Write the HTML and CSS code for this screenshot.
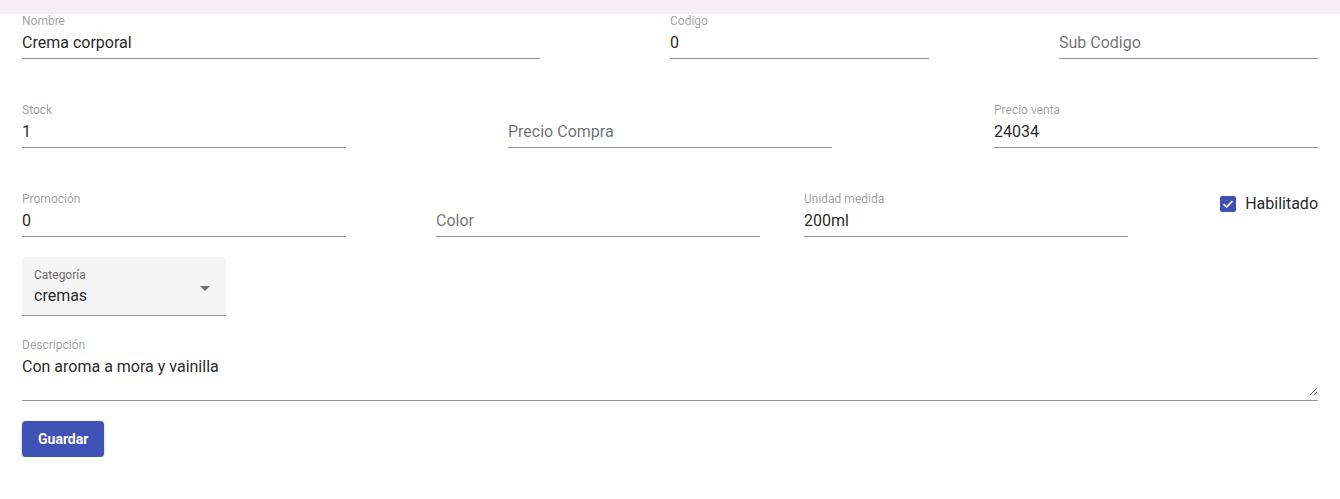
FILE: index.html
```html
<!DOCTYPE html>
<html lang="es">
<head>
<meta charset="utf-8">
<title>Producto</title>
<link rel="stylesheet" href="styles.css">
</head>
<body>
<div class="topbar"></div>
<form class="form">
  <div class="row row-1">
    <label class="field w-wide">
      <span class="flabel">Nombre</span>
      <input class="finput" type="text" value="Crema corporal">
    </label>
    <label class="field w-half">
      <span class="flabel">Codigo</span>
      <input class="finput" type="text" value="0">
    </label>
    <label class="field w-half">
      <span class="flabel"></span>
      <input class="finput" type="text" placeholder="Sub Codigo">
    </label>
  </div>

  <div class="row row-2">
    <label class="field w-third">
      <span class="flabel">Stock</span>
      <input class="finput" type="text" value="1">
    </label>
    <label class="field w-third">
      <span class="flabel"></span>
      <input class="finput" type="text" placeholder="Precio Compra">
    </label>
    <label class="field w-third">
      <span class="flabel">Precio venta</span>
      <input class="finput" type="text" value="24034">
    </label>
  </div>

  <div class="row row-3">
    <label class="field w-third">
      <span class="flabel">Promoción</span>
      <input class="finput" type="text" value="0">
    </label>
    <label class="field w-third ml-color">
      <span class="flabel"></span>
      <input class="finput" type="text" placeholder="Color">
    </label>
    <label class="field w-third ml-unidad">
      <span class="flabel">Unidad medida</span>
      <input class="finput" type="text" value="200ml">
    </label>
    <div class="check">
      <span class="check-box">
        <svg width="16" height="16" viewBox="0 0 16 16"><path d="M3.6 8.2 L6.6 11.1 L12.4 5.2" fill="none" stroke="#ffffff" stroke-width="1.8"/></svg>
      </span>
      <span class="check-text">Habilitado</span>
    </div>
  </div>

  <div class="select">
    <div class="select-main">
      <span class="select-label">Categoría</span>
      <span class="select-value">cremas</span>
    </div>
    <span class="select-arrow"></span>
  </div>

  <label class="field area">
    <span class="flabel">Descripción</span>
    <textarea class="ftext">Con aroma a mora y vainilla</textarea>
  </label>

  <div class="actions">
    <button type="button" class="btn">Guardar</button>
  </div>
</form>
</body>
</html>
```

FILE: styles.css
```css
* { box-sizing: border-box; }
html, body { margin: 0; padding: 0; background: #ffffff; }
body {
  font-family: Roboto, "Noto Sans", "Liberation Sans", sans-serif;
  color: rgba(0,0,0,0.87);
}
.topbar { height: 14px; background: #f5ecf6; }
.form { padding: 1px 22px 0; display: flex; flex-direction: column; }
.row { display: flex; align-items: flex-start; }
.row-1, .row-2 { justify-content: space-between; }
.row-2, .row-3 { margin-top: 45px; }

.field {
  display: flex;
  flex-direction: column;
  border-bottom: 1px solid #949494;
  padding-bottom: 5px;
}
.w-wide { width: 518px; }
.w-half { width: 259px; }
.w-third { width: 324px; }
.ml-color { margin-left: 90px; }
.ml-unidad { margin-left: 44px; }

.flabel {
  display: block;
  height: 13px;
  font-size: 12px;
  line-height: 13px;
  color: rgba(0,0,0,0.4);
}
.finput {
  margin: 5px 0 0;
  padding: 0;
  border: 0;
  outline: none;
  height: 20px;
  font-family: inherit;
  font-size: 16px;
  line-height: 20px;
  color: rgba(0,0,0,0.87);
  background: transparent;
  width: 100%;
}
.finput::placeholder { color: rgba(0,0,0,0.58); }

.check {
  margin-left: auto;
  margin-top: -3px;
  display: flex;
  align-items: center;
  gap: 9px;
  height: 28px;
}
.check-box {
  width: 16px;
  height: 16px;
  border-radius: 2px;
  background: #3f51b5;
  display: flex;
}
.check-text { font-size: 16px; line-height: 20px; color: rgba(0,0,0,0.87); }

.select {
  margin-top: 20px;
  width: 204px;
  height: 59px;
  background: #f5f5f5;
  border-radius: 4px 4px 0 0;
  border-bottom: 1px solid #949494;
  padding: 12px 16px 9px 12px;
  display: flex;
  align-items: center;
}
.select-main { flex: 1; display: flex; flex-direction: column; }
.select-label {
  font-size: 12px;
  line-height: 13px;
  height: 13px;
  color: rgba(0,0,0,0.6);
}
.select-value {
  margin-top: 4px;
  font-size: 16px;
  line-height: 20px;
  color: rgba(0,0,0,0.87);
}
.select-arrow {
  width: 0;
  height: 0;
  border-left: 5px solid transparent;
  border-right: 5px solid transparent;
  border-top: 5px solid rgba(0,0,0,0.54);
  margin-top: 2px;
}

.area { margin-top: 23px; width: 100%; padding-bottom: 4px; }
.ftext {
  margin: 5px 0 0;
  padding: 0;
  border: 0;
  outline: none;
  height: 39px;
  font-family: inherit;
  font-size: 16px;
  line-height: 20px;
  color: rgba(0,0,0,0.87);
  background: transparent;
  width: 100%;
  resize: vertical;
  display: block;
}

.actions { margin-top: 20px; display: flex; }
.btn {
  height: 36px;
  padding: 0 16px;
  border: 0;
  border-radius: 4px;
  background: #3f51b5;
  color: #ffffff;
  font-family: inherit;
  font-size: 14px;
  font-weight: 700;
  box-shadow: 0 3px 1px -2px rgba(0,0,0,0.2), 0 2px 2px 0 rgba(0,0,0,0.14), 0 1px 5px 0 rgba(0,0,0,0.12);
  cursor: pointer;
}
```
